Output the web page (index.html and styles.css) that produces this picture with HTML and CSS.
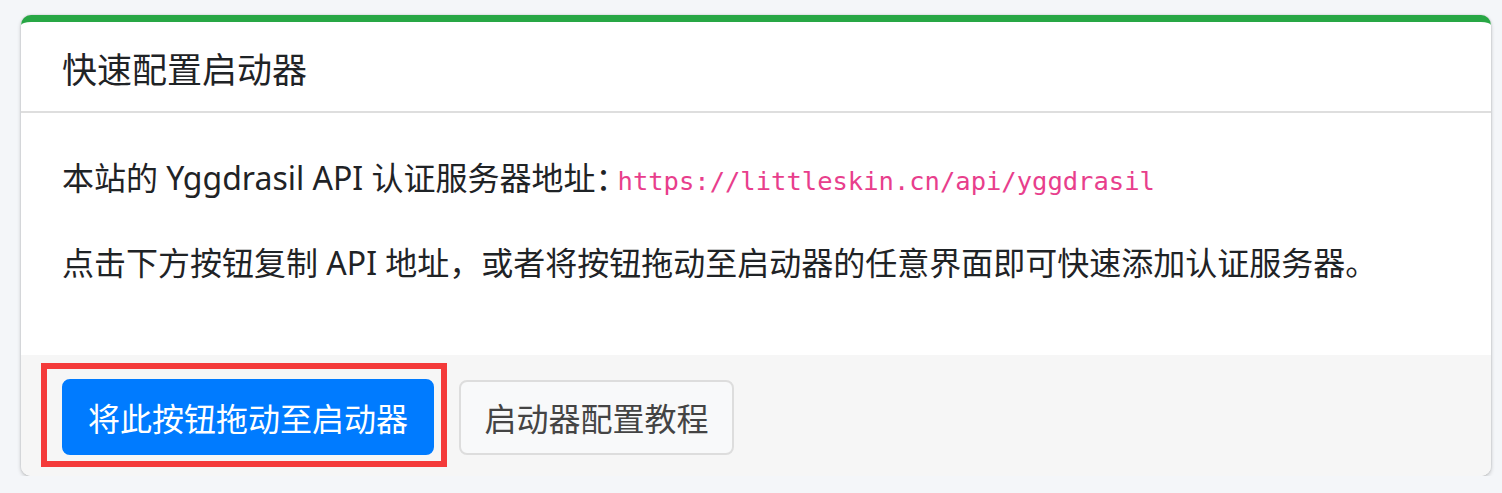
FILE: index.html
```html
<!DOCTYPE html>
<html lang="zh-CN">
<head>
<meta charset="utf-8">
<title>快速配置启动器</title>
<link rel="stylesheet" href="styles.css">
</head>
<body>
<div class="card">
  <div class="card-header">
    <h3 class="card-title">快速配置启动器</h3>
  </div>
  <div class="card-body">
    <p>本站的 Yggdrasil API 认证服务器地址：<code>https://littleskin.cn/api/yggdrasil</code></p>
    <p>点击下方按钮复制 API 地址，或者将按钮拖动至启动器的任意界面即可快速添加认证服务器。</p>
  </div>
  <div class="card-footer">
    <span class="highlight"><a class="btn btn-primary" href="#">将此按钮拖动至启动器</a></span>
    <a class="btn btn-default" href="#">启动器配置教程</a>
  </div>
</div>
</body>
</html>
```

FILE: styles.css
```css
html, body {
  margin: 0;
  background: #f4f6f9;
}
body {
  padding: 15px 11px 0 21px;
  font-family: "Noto Sans", "Noto Sans CJK SC", sans-serif;
  color: #1f2326;
}
.card {
  background: #fff;
  border-top: 7px solid #28a745;
  border-radius: 10px;
  box-shadow: 0 0 2px rgba(0,0,0,.18), 0 2px 4px rgba(0,0,0,.2);
  overflow: hidden;
  position: relative;
}
.card-header {
  height: 89px;
  padding: 0 41px;
  display: flex;
  align-items: center;
  border-bottom: 2px solid #dedede;
}
.card-title {
  margin: 0;
  font-size: 35px;
  font-weight: 400;
  color: #1f2326;
  position: relative;
  top: 1px;
}
.card-body {
  padding: 40px 41px 26px;
  height: 176px;
}
.card-body p {
  margin: 0;
  font-size: 32px;
  line-height: 48px;
}
.card-body p:first-child {
  position: relative;
  top: 1px;
}
.card-body p + p {
  margin-top: 35px;
}
code {
  font-family: "DejaVu Sans Mono", "Liberation Mono", monospace;
  font-size: 25.5px;
  color: #e83e8c;
  margin-left: -10px;
}
.card-footer {
  background: #f6f6f6;
  padding: 24px 41px 21px;
  display: flex;
  align-items: center;
  gap: 25px;
}
.highlight {
  position: relative;
  display: inline-flex;
}
.highlight::after {
  content: "";
  position: absolute;
  left: -21px;
  top: -16px;
  right: -13px;
  bottom: -12px;
  border: 6px solid #f43a3a;
  pointer-events: none;
}
.btn {
  display: inline-flex;
  align-items: center;
  justify-content: center;
  height: 76px;
  box-sizing: border-box;
  padding: 0 20px;
  font-size: 32px;
  border-radius: 8px;
  text-decoration: none;
}
.btn-primary {
  width: 372px;
  background: #007bff;
  color: #fff;
  border: 2px solid #007bff;
}
.btn-default {
  width: 275px;
  background: #f8f9fa;
  color: #444;
  border: 2px solid #dddddd;
  height: 75px;
}
```
